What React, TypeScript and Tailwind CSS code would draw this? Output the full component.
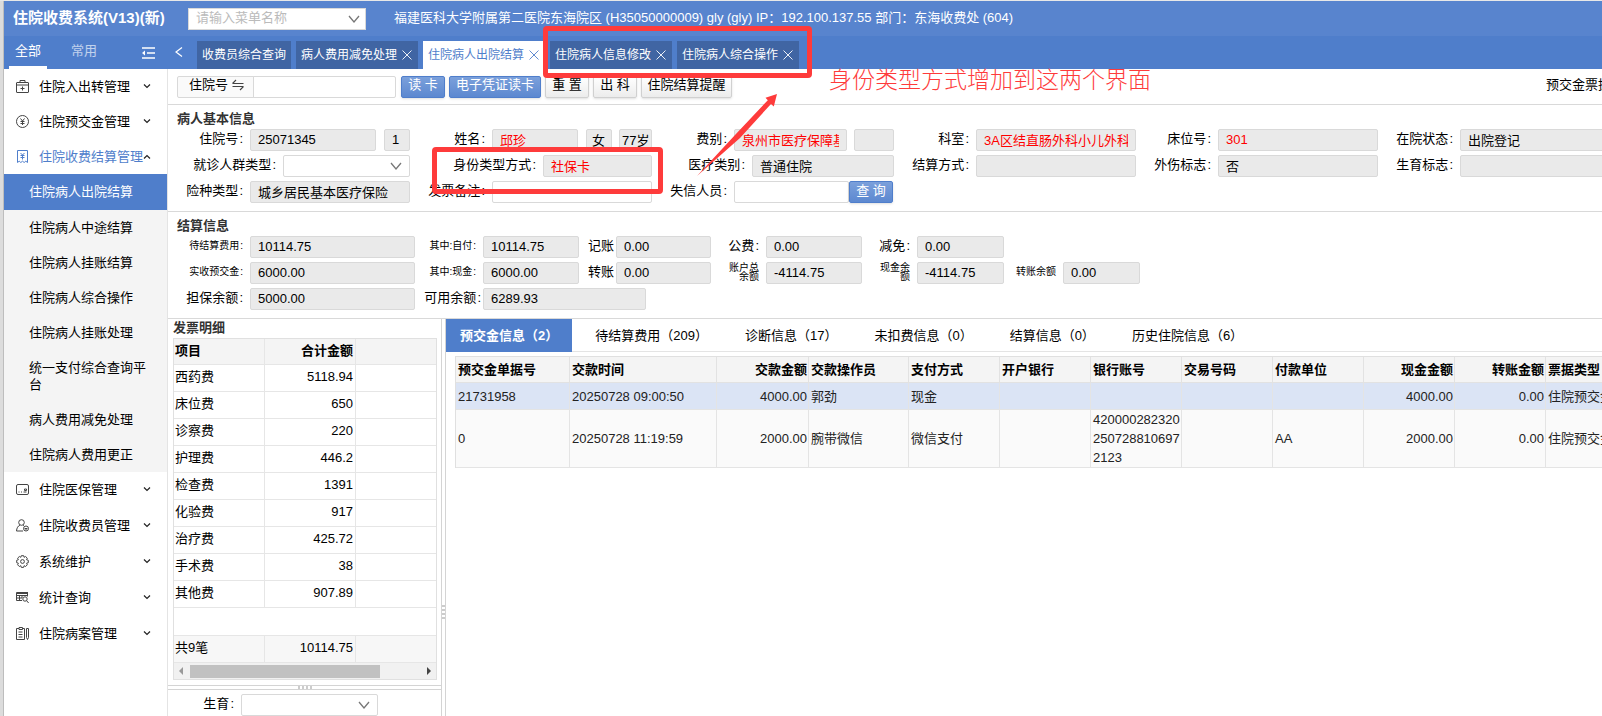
import type { ReactNode } from "react";

type FieldProps = {
  id: string;
  label: string;
  value?: string;
  colon?: boolean;
  labelClass?: string;
  inputClass?: string;
  editable?: boolean;
  children?: ReactNode;
};

const BOX = "h-[22px] min-w-0 rounded-[2px] border border-[#d9d9d9] px-[7px] pb-0.5 text-black outline-none";
const RED_BOX = "h-[22px] min-w-0 rounded-[2px] border border-[#d9d9d9] px-[7px] pb-0.5 text-[#f00] outline-none";

function Field({
  id,
  label,
  value = "",
  colon = true,
  labelClass = "w-[74px] pr-[7px]",
  inputClass = "w-[160px]",
  editable = false,
  red = false,
  children,
}: FieldProps & { red?: boolean }) {
  return (
    <div className="flex shrink-0 items-center">
      <label
        htmlFor={id}
        className={`shrink-0 pb-0.5 text-right whitespace-nowrap text-black ${labelClass}`}
      >
        {label}
        {colon && <span className="ml-px">:</span>}
      </label>
      <input
        id={id}
        readOnly={!editable}
        defaultValue={value}
        className={`${red ? RED_BOX : BOX} ${editable ? "bg-white" : "bg-[#eaeaea]"} ${inputClass}`}
      />
      {children}
    </div>
  );
}

function Chevron({ className = "" }: { className?: string }) {
  return (
    <svg viewBox="0 0 12 8" className={className} fill="none" stroke="currentColor" strokeWidth="1.3">
      <path d="M1 1l5 6 5-6" />
    </svg>
  );
}

function SelectBox({ id, className }: { id: string; className: string }) {
  return (
    <div className={`relative ${className}`}>
      <select
        id={id}
        className="block h-[22px] w-full appearance-none rounded-[2px] border border-[#d9d9d9] bg-white px-[7px] outline-none"
      >
        <option></option>
      </select>
      <Chevron className="pointer-events-none absolute top-[7px] right-2 h-2 w-3 text-[#777]" />
    </div>
  );
}

const ICONS: Record<string, ReactNode> = {
  case: (
    <>
      <rect x="0.5" y="2.5" width="12" height="10" rx="0.5" />
      <path d="M4 2.5v-2h5v2M0.5 5h12M6.5 6.5v4M4.5 8.5h4" />
    </>
  ),
  yen: (
    <>
      <circle cx="6.5" cy="6.5" r="6" />
      <path d="M4.5 3.5l2 2.5 2-2.5M6.5 6v4M4.5 6.5h4M4.5 8.5h4" />
    </>
  ),
  bill: (
    <>
      <path d="M1.5 12.5V.5h10v12" />
      <path d="M1.500 12.500l1.700-1.300 1.600 1.300 1.700-1.300 1.700 1.300 1.600-1.300 1.700 1.300" />
      <path d="M4.5 3l2 2 2-2M6.5 5v4.5M4.5 5.5h4M4.5 7.5h4" />
    </>
  ),
  card: (
    <>
      <rect x="0.5" y="1.5" width="12" height="10" rx="1.5" />
      <path d="M2.5 9h1M5 9h1M7.500 9h3M8.500 6h2v1.500h-2z" />
    </>
  ),
  user: (
    <>
      <circle cx="5.500" cy="3.500" r="2.800" />
      <path d="M4 6c-2 1-3.300 3-3.500 6h6.500M7 6l1 .6" />
      <circle cx="10" cy="9.500" r="2.500" />
      <path d="M8.500 9.500h3M10 9.500v1.500" />
    </>
  ),
  gear: (
    <>
      <path d="M5.300 .7h2.400l.4 1.600 1.500-.8 1.700 1.700-.8 1.500 1.800.6v2.400l-1.700.5.7 1.600-1.700 1.700-1.500-.8-.5 1.700H5.300l-.5-1.700-1.500.8-1.700-1.700.8-1.600-1.700-.5V5.300l1.700-.6-.8-1.500 1.700-1.700 1.500.8z" />
      <circle cx="6.500" cy="6.500" r="1.900" />
    </>
  ),
  query: (
    <>
      <path d="M.5 2h11" strokeWidth="2" />
      <path d="M11.500 1v4.500M.5 1.500v8h5.500M.5 4.500h11M.5 7h5.500M3.500 4v5.500M6 4v3" />
      <circle cx="9" cy="8" r="2.200" />
      <path d="M10.600 9.600l2 2.400" />
    </>
  ),
  clip: (
    <path d="M3 1.500H.5v11h8v-11H6.500M3 .5h3.500v2H3zM2.500 5h4M2.500 7.500h4M2.500 10h4M10.500 1.500h2v9l-1 2-1-2z" />
  ),
};

function MenuItem({ icon, label, open = false }: { icon: string; label: string; open?: boolean }) {
  return (
    <button
      className={`flex h-[35px] w-full items-center pr-4 pl-3 ${open ? "text-[#4f7ecb]" : "text-black"}`}
    >
      <svg
        viewBox="0 0 13 13"
        className={`h-[13px] w-[13px] shrink-0 ${open ? "text-[#4f7ecb]" : "text-[#444]"}`}
        fill="none"
        stroke="currentColor"
        strokeWidth="1"
      >
        {ICONS[icon]}
      </svg>
      <span className="ml-2.5 whitespace-nowrap">{label}</span>
      <svg
        viewBox="0 0 8 5"
        className={`ml-auto h-[5px] w-2 shrink-0 text-[#222] ${open ? "rotate-180" : ""}`}
        fill="none"
        stroke="currentColor"
        strokeWidth="1.200"
      >
        <path d="M1 .5l3 3 3-3" />
      </svg>
    </button>
  );
}

const SUB_ITEMS = [
  "住院病人出院结算",
  "住院病人中途结算",
  "住院病人挂账结算",
  "住院病人综合操作",
  "住院病人挂账处理",
  "统一支付综合查询平台",
  "病人费用减免处理",
  "住院病人费用更正",
];

function Sidebar() {
  return (
    <nav className="w-[164px] shrink-0 border-r border-[#e4e4e4] bg-white">
      <MenuItem icon="case" label="住院入出转管理" />
      <MenuItem icon="yen" label="住院预交金管理" />
      <MenuItem icon="bill" label="住院收费结算管理" open />
      <ul className="bg-[#f4f4f4]">
        {SUB_ITEMS.map((item, i) => (
          <li key={item}>
            <a
              href="#"
              className={`block pr-4 pl-[25px] leading-[17px] ${
                i === 0 ? "bg-[#4f7ecb] pt-[9px] pb-[10px] text-white" : "py-[9px] text-black"
              }`}
            >
              {item}
            </a>
          </li>
        ))}
      </ul>
      <div className="flex flex-col gap-px">
        <MenuItem icon="card" label="住院医保管理" />
        <MenuItem icon="user" label="住院收费员管理" />
        <MenuItem icon="gear" label="系统维护" />
        <MenuItem icon="query" label="统计查询" />
        <MenuItem icon="clip" label="住院病案管理" />
      </div>
    </nav>
  );
}

const PAGES = [
  { label: "收费员综合查询" },
  { label: "病人费用减免处理", closable: true },
  { label: "住院病人出院结算", closable: true, active: true },
  { label: "住院病人信息修改", closable: true },
  { label: "住院病人综合操作", closable: true },
];

function Header() {
  return (
    <header className="text-white">
      <div className="flex h-[35px] items-center bg-[#5884ce]">
        <h1 className="w-[184px] shrink-0 pb-0.5 pl-[9px] text-[15px] font-bold whitespace-nowrap">
          住院收费系统(V13)(新)
        </h1>
        <div className="relative w-[178px] shrink-0 text-[#777]">
          <input
            aria-label="菜单名称"
            placeholder="请输入菜单名称"
            className="block h-[22px] w-full border border-[#d9d9d9] bg-white px-[7px] pb-0.5 outline-none placeholder:text-[#bbb]"
          />
          <Chevron className="pointer-events-none absolute top-[7px] right-[6px] h-2 w-3" />
        </div>
        <p className="ml-7 pb-0.5 whitespace-nowrap">
          福建医科大学附属第二医院东海院区 (H35050000009) gly (gly) IP：192.100.137.55 部门：东海收费处 (604)
        </p>
      </div>
      <div className="flex h-[33px] bg-[#4f7ecb]">
        <div className="flex w-[164px] shrink-0 items-stretch pl-[5px]">
          <button className="w-[38px] border-b-[3px] border-white">全部</button>
          <button className="ml-[18px] w-[38px] border-b-[3px] border-transparent text-white/65">常用</button>
          <svg viewBox="0 0 13 12" className="mt-[11px] ml-[39px] h-3 w-[13px]" stroke="currentColor" strokeWidth="1.500" fill="none">
            <path d="M0 1h13M5 6h8M0 11h13" />
            <path d="M0 6l3-2.500v5z" fill="currentColor" stroke="none" />
          </svg>
        </div>
        <svg viewBox="0 0 8 10" className="mt-[11px] ml-[7px] h-[10px] w-2 shrink-0" stroke="currentColor" fill="none" strokeWidth="1.200">
          <path d="M7 .5L1 5l6 4.500" />
        </svg>
        <div className="ml-[14px] flex gap-[5px] pt-[5px] text-xs">
          {PAGES.map((p) => (
            <button
              key={p.label}
              className={`flex h-7 items-center px-[5px] whitespace-nowrap ${
                p.active ? "bg-white text-[#4f7ecb]" : "bg-[#4065a3]"
              }`}
            >
              {p.label}
              {p.closable && (
                <svg viewBox="0 0 10 10" className="mr-px ml-[5px] h-[10px] w-[10px]" stroke="currentColor" strokeWidth="0.9">
                  <path d="M.5 .5l9 9M9.500 .5l-9 9" />
                </svg>
              )}
            </button>
          ))}
        </div>
      </div>
    </header>
  );
}

const BTN = "h-[22px] rounded-[2px] border whitespace-nowrap leading-4 pb-[3px] shadow-sm";
const BLUE = "border-[#4f7ecb] bg-linear-to-b from-[#7ba0db] to-[#5c88d0] text-white";
const GRAY = "border-[#d0d0d0] bg-linear-to-b from-white to-[#ececec] text-black";

function Toolbar() {
  return (
    <div className="flex h-9 items-center border-b border-[#d9d9d9] pl-[9px]">
      <label
        htmlFor="search-no"
        className="flex h-[22px] w-[77px] shrink-0 items-center rounded-l-[2px] border border-[#d9d9d9] bg-[#fafafa] pb-[3px] pl-[11px] text-black"
      >
        住院号
        <svg viewBox="0 0 12 12" className="ml-1 h-3 w-3 text-[#444]" fill="none" stroke="currentColor" strokeWidth="1.100">
          <path d="M.5 4.500h11M.5 4.500l3.500-3.500M11.500 7.500H.5M11.500 7.500L8 11" />
        </svg>
      </label>
      <input id="search-no" className="-ml-px h-[22px] w-[143px] rounded-r-[2px] border border-[#d9d9d9] px-[7px] outline-none" />
      <div className="ml-[5px] flex gap-1">
        <button className={`${BTN} ${BLUE} w-11`}>读 卡</button>
        <button className={`${BTN} ${BLUE} w-[92px]`}>电子凭证读卡</button>
        <button className={`${BTN} ${GRAY} w-11`}>重 置</button>
        <button className={`${BTN} ${GRAY} w-11`}>出 科</button>
        <button className={`${BTN} ${GRAY} w-[91px]`}>住院结算提醒</button>
      </div>
      <span className="ml-auto w-14 overflow-hidden pb-[3px] whitespace-nowrap text-black">预交金票据</span>
    </div>
  );
}

function PatientInfo() {
  return (
    <section className="h-[107px] overflow-hidden border-b border-[#d9d9d9] pt-1 pl-2">
      <h2 className="pl-px leading-5 font-bold">病人基本信息</h2>
      <div className="flex flex-col gap-1">
        <div className="flex gap-2">
          <Field id="inp-no" label="住院号" value="25071345" inputClass="w-[126px]">
            <input aria-label="住院次数" readOnly defaultValue="1" className={`${BOX} ml-2 w-[26px] bg-[#eaeaea]`} />
          </Field>
          <Field id="name" label="姓名" value="邱珍" red inputClass="w-[86px]">
            <input
              aria-label="性别"
              readOnly
              defaultValue="女"
              className="ml-2 h-[22px] w-[26px] rounded-[2px] border border-[#d9d9d9] bg-[#eaeaea] pb-0.5 pl-[5px] text-black outline-none"
            />
            <input
              aria-label="年龄"
              readOnly
              defaultValue="77岁"
              className="ml-[7px] h-[22px] w-[33px] rounded-[2px] border border-[#d9d9d9] bg-[#eaeaea] pb-0.5 pl-[2px] text-black outline-none"
            />
          </Field>
          <Field id="fee" label="费别" value="泉州市医疗保障基金" red inputClass="w-[113px]">
            <input aria-label="费别备注" readOnly className={`${BOX} ml-[7px] w-10 bg-[#eaeaea]`} />
          </Field>
          <Field id="dept" label="科室" value="3A区结直肠外科小儿外科" red />
          <Field id="bed" label="床位号" value="301" red />
          <Field id="state" label="在院状态" value="出院登记" />
        </div>
        <div className="flex gap-2">
          <div className="flex shrink-0 items-center">
            <label htmlFor="crowd" className="w-[107px] pr-[7px] pb-0.5 text-right whitespace-nowrap text-black">
              就诊人群类型<span className="ml-px">:</span>
            </label>
            <SelectBox id="crowd" className="w-[127px]" />
          </div>
          <Field id="idtype" label="身份类型方式" value="社保卡" red labelClass="w-[125px] pr-[7px]" inputClass="w-[109px]" />
          <Field id="medtype" label="医疗类别" value="普通住院" labelClass="w-[92px] pr-[7px]" inputClass="w-[142px]" />
          <Field id="settle" label="结算方式" />
          <Field id="injury" label="外伤标志" value="否" />
          <Field id="birthflag" label="生育标志" />
        </div>
        <div className="flex gap-2">
          <Field id="insure" label="险种类型" value="城乡居民基本医疗保险" />
          <Field id="remark" label="发票备注" editable />
          <Field id="credit" label="失信人员" editable inputClass="w-[115px]">
            <button className={`${BTN} ${BLUE} w-11`}>查 询</button>
          </Field>
        </div>
      </div>
    </section>
  );
}

function SettleInfo() {
  return (
    <section className="h-[107px] overflow-hidden border-b border-[#d9d9d9] pt-1 pl-2">
      <h2 className="pl-px leading-5 font-bold">结算信息</h2>
      <div className="flex flex-col gap-1">
        <div className="flex">
          <Field id="s1" label="待结算费用" value="10114.75" labelClass="w-[74px] pr-[7px] text-[10px]" inputClass="w-[165px]" />
          <Field id="s2" label="其中:自付" value="10114.75" labelClass="w-[68px] pr-[7px] text-[10px]" inputClass="w-[96px]" />
          <Field id="s3" label="记账" value="0.00" colon={false} labelClass="w-[37px] pr-[2px]" inputClass="w-[95px]" />
          <Field id="s4" label="公费" value="0.00" labelClass="w-[55px] pr-[7px]" inputClass="w-[96px]" />
          <Field id="s5" label="减免" value="0.00" labelClass="w-[55px] pr-[7px]" inputClass="w-[87px]" />
        </div>
        <div className="flex">
          <Field id="s6" label="实收预交金" value="6000.00" labelClass="w-[74px] pr-[7px] text-[10px]" inputClass="w-[165px]" />
          <Field id="s7" label="其中:现金" value="6000.00" labelClass="w-[68px] pr-[7px] text-[10px]" inputClass="w-[96px]" />
          <Field id="s8" label="转账" value="0.00" colon={false} labelClass="w-[37px] pr-[2px]" inputClass="w-[95px]" />
          {[
            { id: "s9", label: "账户总余额", box: "w-[96px]" },
            { id: "s10", label: "现金余额", box: "w-[87px]" },
          ].map((f) => (
            <div key={f.id} className="flex items-center">
              <label htmlFor={f.id} className="w-[55px] pr-[7px] pb-0.5 pl-3 text-right text-[10px] leading-[9px] text-black">
                {f.label}
              </label>
              <input id={f.id} readOnly defaultValue="-4114.75" className={`${BOX} bg-[#eaeaea] ${f.box}`} />
            </div>
          ))}
          <Field id="s11" label="转账余额" value="0.00" colon={false} labelClass="w-[59px] pr-[7px] text-[10px]" inputClass="w-[77px]" />
        </div>
        <div className="flex">
          <Field id="s12" label="担保余额" value="5000.00" inputClass="w-[165px]" />
          <Field id="s13" label="可用余额" value="6289.93" labelClass="w-[68px] pr-[2px]" inputClass="w-[163px]" />
        </div>
      </div>
    </section>
  );
}

const INVOICE = [
  ["西药费", "5118.94"],
  ["床位费", "650"],
  ["诊察费", "220"],
  ["护理费", "446.2"],
  ["检查费", "1391"],
  ["化验费", "917"],
  ["治疗费", "425.72"],
  ["手术费", "38"],
  ["其他费", "907.89"],
];

function InvoicePanel() {
  const cell = "border-r border-b border-[#e6e6e6] pl-px pr-[2px] pt-0 pb-0.5";
  return (
    <div className="w-[273px] shrink-0 text-black">
      <h2 className="h-[19px] pl-[5px] leading-[18px] font-bold text-[#333]">发票明细</h2>
      <div className="mr-[4px] ml-[5px] border border-[#e0e0e0]">
        <table className="w-full table-fixed border-separate border-spacing-0">
          <thead>
            <tr className="h-[26px] bg-[#f4f4f4]">
              <th className={`${cell} w-[91px] text-left font-bold`}>项目</th>
              <th className={`${cell} w-[91px] text-right font-bold`}>合计金额</th>
              <th className="border-b border-[#e6e6e6]"></th>
            </tr>
          </thead>
          <tbody>
            {INVOICE.map(([name, sum]) => (
              <tr key={name} className="h-[27px]">
                <td className={cell}>{name}</td>
                <td className={`${cell} text-right`}>{sum}</td>
                <td className="border-b border-[#e6e6e6]"></td>
              </tr>
            ))}
            <tr className="h-7">
              <td colSpan={3} className="border-b border-[#e6e6e6]"></td>
            </tr>
          </tbody>
          <tfoot>
            <tr className="h-[27px] bg-[#f7f7f7]">
              <td className={cell}>共9笔</td>
              <td className={`${cell} text-right`}>10114.75</td>
              <td className="border-b border-[#e6e6e6]"></td>
            </tr>
          </tfoot>
        </table>
        <div className="flex h-4 items-center bg-[#f1f1f1] px-[5px]">
          <svg viewBox="0 0 4 8" className="h-2 w-1 fill-[#999]">
            <path d="M4 0v8L0 4z" />
          </svg>
          <div className="ml-[7px] h-[13px] w-[190px] bg-[#c1c1c1]" />
          <svg viewBox="0 0 4 8" className="ml-auto h-2 w-1 fill-[#444]">
            <path d="M0 0v8l4-4z" />
          </svg>
        </div>
      </div>
      <div className="mt-[5px] flex h-[5px] items-center justify-center gap-[2px] border-y border-[#d4d4d4]">
        {[0, 1, 2, 3].map((n) => (
          <i key={n} className="h-[3px] w-[2px] bg-[#ccc]" />
        ))}
      </div>
      <div className="flex items-center pt-1">
        <label htmlFor="birth" className="w-[73px] pr-[7px] pb-0.5 text-right">
          生育<span className="ml-px">:</span>
        </label>
        <SelectBox id="birth" className="w-[137px]" />
      </div>
    </div>
  );
}

const TABS = ["待结算费用（209）", "诊断信息（17）", "未扣费信息（0）", "结算信息（0）", "历史住院信息（6）"];

const COLS = [
  { title: "预交金单据号", width: "w-[114px]" },
  { title: "交款时间", width: "w-[147px]" },
  { title: "交款金额", width: "w-[92px]", right: true },
  { title: "交款操作员", width: "w-[100px]" },
  { title: "支付方式", width: "w-[91px]" },
  { title: "开户银行", width: "w-[91px]" },
  { title: "银行账号", width: "w-[91px]" },
  { title: "交易号码", width: "w-[91px]" },
  { title: "付款单位", width: "w-[91px]" },
  { title: "现金金额", width: "w-[91px]", right: true },
  { title: "转账金额", width: "w-[91px]", right: true },
  { title: "票据类型", width: "w-[91px]" },
];

const ROWS = [
  ["21731958", "20250728 09:00:50", "4000.00", "郭劲", "现金", "", "", "", "", "4000.00", "0.00", "住院预交金"],
  ["0", "20250728 11:19:59", "2000.00", "腕带微信", "微信支付", "", "4200002823202507288106972123", "", "AA", "2000.00", "0.00", "住院预交金"],
];

function DepositPanel() {
  return (
    <div className="min-w-0 flex-1 overflow-hidden">
      <div className="flex h-[33px] items-stretch gap-[9px] border-b border-[#e4e4e4] text-black" role="tablist">
        <button role="tab" aria-selected className="-mb-px bg-[#4f7ecb] px-[14px] font-bold whitespace-nowrap text-white">
          预交金信息（2）
        </button>
        {TABS.map((t) => (
          <button key={t} role="tab" className="px-[14px] pt-px whitespace-nowrap">
            {t}
          </button>
        ))}
      </div>
      <div className="mt-1 ml-[9px] overflow-hidden">
        <table className="w-[1181px] table-fixed border-separate border-spacing-0 border-t border-l border-[#e0e0e0] text-[#222]">
          <thead>
            <tr className="h-[26px] bg-[#f4f4f4] text-black">
              {COLS.map((c) => (
                <th
                  key={c.title}
                  className={`border-r border-b border-[#e2e2e2] p-0 font-bold whitespace-nowrap ${c.width} ${
                    c.right ? "pr-px text-right" : "pl-[2px] text-left"
                  }`}
                >
                  {c.title}
                </th>
              ))}
            </tr>
          </thead>
          <tbody>
            {ROWS.map((row, r) => (
              <tr key={row[1]} className={r === 0 ? "h-[27px] bg-[#dbe4f5]" : "h-[57px] bg-[#fafafa]"}>
                {row.map((v, i) => (
                  <td
                    key={i}
                    className={`border-r border-b border-[#e4e4e4] p-0 leading-[19px] break-all ${
                      COLS[i].right ? "pr-px text-right" : "pl-[2px]"
                    }`}
                  >
                    {v}
                  </td>
                ))}
              </tr>
            ))}
          </tbody>
        </table>
      </div>
    </div>
  );
}

// red review marks laid over the page
function Annotations() {
  return (
    <div className="pointer-events-none absolute inset-0 overflow-hidden text-[#fe3b3b]">
      <div className="absolute top-[25px] left-[543px] h-[52px] w-[269px] rounded-[4px] border-[5px] border-current" />
      <div className="absolute top-[146px] left-[432px] h-[47px] w-[231px] rounded-[4px] border-[5px] border-current" />
      <svg viewBox="0 0 80 82" className="absolute top-[93px] left-[697px] h-[82px] w-20 fill-current">
        <path d="M80 0L68.500 3.700l2.300 2.500L38 41 0 82 43 44 74 10l2.800 2.500z" />
      </svg>
      <p className="absolute top-[65px] left-[829px] text-[23px] leading-7 font-light whitespace-nowrap">
        身份类型方式增加到这两个界面
      </p>
    </div>
  );
}

export default function App() {
  return (
    <div className="relative flex h-screen flex-col overflow-hidden border-t border-[#e8e8e8] bg-white font-['Liberation_Sans','Noto_Sans_CJK_SC',sans-serif] text-[13px] leading-[18px] text-[#333]">
      <div className="flex min-h-0 flex-1">
        <div className="w-1 shrink-0 border-r border-[#bdbdbd] bg-[#dcdcdc]" />
        <div className="flex min-w-0 flex-1 flex-col">
          <Header />
          <div className="flex min-h-0 flex-1">
            <Sidebar />
            <main className="flex min-w-0 flex-1 flex-col overflow-hidden">
              <Toolbar />
              <PatientInfo />
              <SettleInfo />
              <div className="flex min-h-0 flex-1">
                <InvoicePanel />
                <div className="flex w-[5px] shrink-0 flex-col items-center justify-center gap-[2px] border-x border-[#d4d4d4] pt-[188px]">
                  {[0, 1, 2, 3].map((n) => (
                    <i key={n} className="h-[2px] w-[3px] bg-[#ccc]" />
                  ))}
                </div>
                <DepositPanel />
              </div>
            </main>
          </div>
        </div>
      </div>
      <Annotations />
    </div>
  );
}
